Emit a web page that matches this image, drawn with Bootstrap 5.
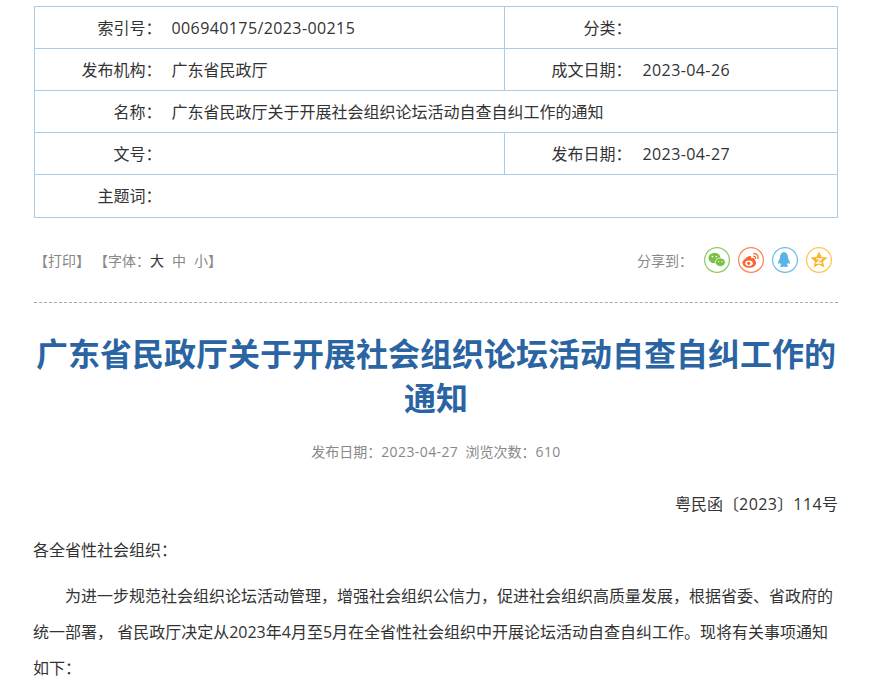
<!DOCTYPE html>
<html lang="zh-CN">
<head>
<meta charset="utf-8">
<title>广东省民政厅</title>
<link href="https://cdn.jsdelivr.net/npm/bootstrap@5.3.0/dist/css/bootstrap.min.css" rel="stylesheet">
<style>
html,body{height:684px;overflow:hidden}
body{font-family:"Open Sans","Noto Sans CJK SC",sans-serif;color:#333;background:#fff}
.page-wrap{padding:6px 34px 0 34px}
.num{letter-spacing:.4px}
.meta-table{width:804px;table-layout:fixed;border-collapse:collapse;font-size:16px;color:#333;margin:0}
.meta-table tr{border:1px solid #a9cce8}
.meta-table td{height:42px;padding:0;vertical-align:middle;line-height:24px}
.meta-table tr:last-child td{height:43px}
.meta-table .lb{text-align:right;padding-right:10px}
.meta-table .lb2{text-align:right;padding-right:11px;border-left:1px solid #a9cce8}
.tool-row{height:85px;border-bottom:1px dashed #aaa;font-size:14px;color:#888;padding-bottom:1px}
.tool-left{padding-top:1px}
.tool-left .cur{color:#333}
.sz-opt{margin-left:8px}
.tool-gap{margin-left:11px}
.share-box{padding-right:6px}
.share-lbl{margin-right:3px}
.share-ic{width:26px;height:26px;display:block}
.doc-title{font-family:"Noto Sans CJK SC",sans-serif;font-size:32px;line-height:44px;font-weight:700;color:#2a64a3;text-align:center;margin:27px 0 0}
.doc-info{font-size:14px;color:#888;text-align:center;line-height:24px;margin-top:22px}
.doc-no{font-size:16px;text-align:right;line-height:24px;margin-top:28px;color:#333}
.doc-body{margin-left:-1px}
.doc-body p{font-size:16px;line-height:36px;margin:0;color:#333}
.doc-body .ind{text-indent:32px}
.doc-to{margin-top:16px!important}
.doc-para{margin-top:10px!important}
</style>
</head>
<body>
<div class="page-wrap">
<table class="meta-table">
<colgroup><col style="width:137px"><col style="width:333px"><col style="width:138px"><col></colgroup>
<tr><td class="lb">索引号：</td><td><span class="num">006940175/2023-00215</span></td><td class="lb2">分类：</td><td></td></tr>
<tr><td class="lb">发布机构：</td><td>广东省民政厅</td><td class="lb2">成文日期：</td><td><span class="num">2023-04-26</span></td></tr>
<tr><td class="lb">名称：</td><td colspan="3">广东省民政厅关于开展社会组织论坛活动自查自纠工作的通知</td></tr>
<tr><td class="lb">文号：</td><td></td><td class="lb2">发布日期：</td><td><span class="num">2023-04-27</span></td></tr>
<tr><td class="lb">主题词：</td><td colspan="3"></td></tr>
</table>

<div class="tool-row d-flex justify-content-between align-items-center">
<div class="tool-left"><span>【打印】</span><span class="tool-gap">【字体：</span><span class="cur">大</span><span class="sz-opt">中</span><span class="sz-opt">小</span><span>】</span></div>
<div class="share-box d-flex align-items-center gap-2">
<span class="tool-left share-lbl">分享到：</span>
<svg class="share-ic" viewBox="0 0 26 26"><circle cx="13" cy="13" r="12.4" fill="#fff" stroke="#8ccb5e" stroke-width="1.200"/><ellipse cx="10.500" cy="11" rx="6" ry="5.200" fill="#7ac143"/><ellipse cx="16.300" cy="15.300" rx="5" ry="4.200" fill="#7ac143" stroke="#fff" stroke-width=".8"/><circle cx="8.400" cy="9.600" r=".9" fill="#fff"/><circle cx="12.400" cy="9.600" r=".9" fill="#fff"/><circle cx="14.600" cy="14.600" r=".7" fill="#fff"/><circle cx="18" cy="14.600" r=".7" fill="#fff"/></svg>
<svg class="share-ic" viewBox="0 0 26 26"><circle cx="13" cy="13" r="12.4" fill="#fff" stroke="#ff7f50" stroke-width="1.200"/><ellipse cx="11.300" cy="16" rx="6.800" ry="4.800" fill="#f8632f"/><path d="M4.800 15.500c1-3 4-6 7-6.600 1.500-.2 1.800 1 1.200 2.600 2-.8 4-.4 3.800 1.600" fill="#f8632f"/><ellipse cx="11" cy="16.200" rx="3.800" ry="2.700" fill="#fff"/><circle cx="10.600" cy="16.300" r="1.600" fill="#f8632f"/><path d="M15.500 6.800c3-.6 5.200 1.900 4.400 4.800M15.800 9.400c1.400-.3 2.200.8 1.800 2" fill="none" stroke="#f8632f" stroke-width="1.200" stroke-linecap="round"/></svg>
<svg class="share-ic" viewBox="0 0 26 26"><circle cx="13" cy="13" r="12.4" fill="#fff" stroke="#6bbdec" stroke-width="1.200"/><path d="M13 5c-3.200 0-5 2.300-5 5.300 0 1-.3 1.500-1 2.800-.9 1.600-1.100 3.300-.5 3.700.4.200 1-.4 1.500-1 .2 1 .7 1.700 1.300 2.300-.8.300-1.400.7-1.300 1.200.2.700 2 .7 3.300.4.500-.1 1-.1 1.400 0 1.300.3 3.100.3 3.300-.4.100-.5-.5-.9-1.300-1.200.6-.6 1.100-1.300 1.300-2.300.5.600 1.100 1.200 1.500 1 .6-.4.400-2.100-.5-3.700-.7-1.300-1-1.800-1-2.800 0-3-1.800-5.300-5-5.300z" fill="#56b6e7"/></svg>
<svg class="share-ic" viewBox="0 0 26 26"><circle cx="13" cy="13" r="12.4" fill="#fff" stroke="#ffc54d" stroke-width="1.200"/><path d="M13 4.500l2.600 5.400 5.900.7-4.400 4 1.200 5.900-5.300-3-5.300 3 1.200-5.900-4.400-4 5.900-.7z" fill="#f9b52a"/><path d="M10.300 11.800h5.400l-5 4.400h5.400" fill="none" stroke="#fff" stroke-width="1.200"/></svg>
</div>
</div>

<h1 class="doc-title">广东省民政厅关于开展社会组织论坛活动自查自纠工作的通知</h1>
<div class="doc-info">发布日期：<span class="num">2023-04-27</span>&nbsp;&nbsp;浏览次数：<span class="num">610</span></div>
<div class="doc-no">粤民函〔<span class="num">2023</span>〕<span class="num">114</span>号</div>
<div class="doc-body">
<p class="doc-to">各全省性社会组织：</p>
<p class="ind doc-para">为进一步规范社会组织论坛活动管理，增强社会组织公信力，促进社会组织高质量发展，根据省委、省政府的统一部署， 省民政厅决定从2023年4月至5月在全省性社会组织中开展论坛活动自查自纠工作。现将有关事项通知如下：</p>
</div>
</div>
</body>
</html>
